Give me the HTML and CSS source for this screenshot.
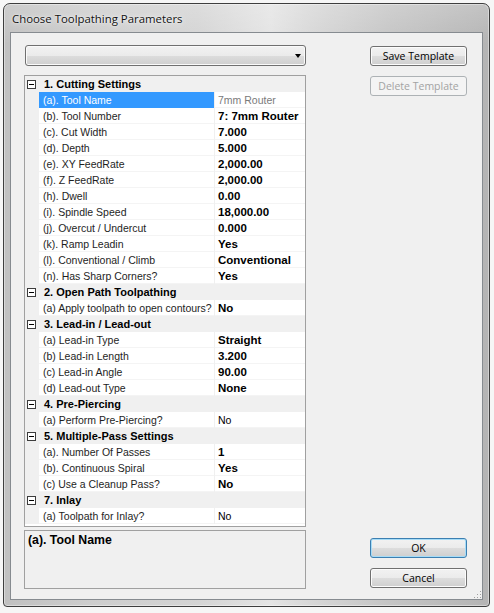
FILE: index.html
```html
<!DOCTYPE html>
<html>
<head>
<meta charset="utf-8">
<title>Choose Toolpathing Parameters</title>
<link rel="stylesheet" href="styles.css">
</head>
<body>
<div class="window">
  <div class="titlebar"><span class="title">Choose Toolpathing Parameters</span></div>
  <div class="client">
    <div class="left">
      <div class="combo"><span class="arrow"></span></div>
      <div class="grid">
        <div class="row cat"><div class="m"><span class="box"></span></div><div class="cat-label">1. Cutting Settings</div></div>
        <div class="row"><div class="m"></div><div class="label sel">(a). Tool Name</div><div class="value ro">7mm Router</div></div>
        <div class="row"><div class="m"></div><div class="label">(b). Tool Number</div><div class="value b">7: 7mm Router</div></div>
        <div class="row"><div class="m"></div><div class="label">(c). Cut Width</div><div class="value b">7.000</div></div>
        <div class="row"><div class="m"></div><div class="label">(d). Depth</div><div class="value b">5.000</div></div>
        <div class="row"><div class="m"></div><div class="label">(e). XY FeedRate</div><div class="value b">2,000.00</div></div>
        <div class="row"><div class="m"></div><div class="label">(f). Z FeedRate</div><div class="value b">2,000.00</div></div>
        <div class="row"><div class="m"></div><div class="label">(h). Dwell</div><div class="value b">0.00</div></div>
        <div class="row"><div class="m"></div><div class="label">(i). Spindle Speed</div><div class="value b">18,000.00</div></div>
        <div class="row"><div class="m"></div><div class="label">(j). Overcut / Undercut</div><div class="value b">0.000</div></div>
        <div class="row"><div class="m"></div><div class="label">(k). Ramp Leadin</div><div class="value b">Yes</div></div>
        <div class="row"><div class="m"></div><div class="label">(l). Conventional / Climb</div><div class="value b">Conventional</div></div>
        <div class="row"><div class="m"></div><div class="label">(n). Has Sharp Corners?</div><div class="value b">Yes</div></div>
        <div class="row cat"><div class="m"><span class="box"></span></div><div class="cat-label">2. Open Path Toolpathing</div></div>
        <div class="row"><div class="m"></div><div class="label">(a) Apply toolpath to open contours?</div><div class="value b">No</div></div>
        <div class="row cat"><div class="m"><span class="box"></span></div><div class="cat-label">3. Lead-in / Lead-out</div></div>
        <div class="row"><div class="m"></div><div class="label">(a) Lead-in Type</div><div class="value b">Straight</div></div>
        <div class="row"><div class="m"></div><div class="label">(b) Lead-in Length</div><div class="value b">3.200</div></div>
        <div class="row"><div class="m"></div><div class="label">(c) Lead-in Angle</div><div class="value b">90.00</div></div>
        <div class="row"><div class="m"></div><div class="label">(d) Lead-out Type</div><div class="value b">None</div></div>
        <div class="row cat"><div class="m"><span class="box"></span></div><div class="cat-label">4. Pre-Piercing</div></div>
        <div class="row"><div class="m"></div><div class="label">(a) Perform Pre-Piercing?</div><div class="value">No</div></div>
        <div class="row cat"><div class="m"><span class="box"></span></div><div class="cat-label">5. Multiple-Pass Settings</div></div>
        <div class="row"><div class="m"></div><div class="label">(a). Number Of Passes</div><div class="value b">1</div></div>
        <div class="row"><div class="m"></div><div class="label">(b). Continuous Spiral</div><div class="value b">Yes</div></div>
        <div class="row"><div class="m"></div><div class="label">(c) Use a Cleanup Pass?</div><div class="value b">No</div></div>
        <div class="row cat"><div class="m"><span class="box"></span></div><div class="cat-label">7. Inlay</div></div>
        <div class="row"><div class="m"></div><div class="label">(a) Toolpath for Inlay?</div><div class="value">No</div></div>
      </div>
      <div class="desc"><div class="desc-title">(a). Tool Name</div></div>
    </div>
    <div class="right">
      <button class="btn save">Save Template</button>
      <button class="btn disabled">Delete Template</button>
      <button class="btn default ok">OK</button>
      <button class="btn cancel">Cancel</button>
    </div>
    <div class="grip"></div>
  </div>
</div>
</body>
</html>
```

FILE: styles.css
```css
html, body {
  margin: 0;
  padding: 0;
}
body {
  background: #f6f6f6;
  width: 494px;
  height: 613px;
  overflow: hidden;
  padding: 3px 0 0 3px;
  box-sizing: border-box;
}
.window {
  width: 487px;
  height: 604px;
  box-sizing: border-box;
  border: 1px solid #3e3e3e;
  border-radius: 7px 7px 4px 4px;
  background:
    linear-gradient(to bottom, rgba(255,255,255,0.2), rgba(255,255,255,0) 40px),
    linear-gradient(to right, #c0c0c0 0%, #cdcdcd 18%, #d4d4d4 40%, #e4e4e4 55%, #d6d6d6 64%, #c4c4c4 80%, #b4b4b4 100%);
  display: flex;
  flex-direction: column;
  box-shadow: inset 0 0 0 1px rgba(255,255,255,0.4);
}
.titlebar {
  height: 28px;
  flex: none;
  display: flex;
  align-items: center;
  padding-left: 8px;
}
.title {
  font-family: "Open Sans", "Noto Sans", sans-serif;
  font-size: 11.4px;
  color: #111;
  text-shadow: 0 0 6px rgba(255,255,255,0.9), 0 0 2px rgba(255,255,255,0.9);
  margin-top: 1px;
}
.client {
  position: relative;
  flex: none;
  margin: 0 6px 6px 6px;
  height: 568px;
  box-sizing: border-box;
  border: 1px solid #868b90;
  background: #f0f0f0;
  display: flex;
  font-family: "Liberation Sans", Arial, sans-serif;
}
.left {
  margin-left: 13px;
  width: 282px;
  padding-top: 12px;
  display: flex;
  flex-direction: column;
}
.combo {
  position: relative;
  margin-left: 1px;
  width: 281px;
  height: 21px;
  box-sizing: border-box;
  border: 1px solid #707070;
  border-radius: 3px;
  background: linear-gradient(#f2f2f2 0%, #ebebeb 50%, #dddddd 50%, #cfcfcf 100%);
  box-shadow: inset 0 0 0 1px #fafafa;
}
.arrow {
  position: absolute;
  right: 4px;
  top: 8px;
  width: 0;
  height: 0;
  border-left: 3.5px solid transparent;
  border-right: 3.5px solid transparent;
  border-top: 4px solid #000;
}
.grid {
  margin-top: 9px;
  height: 452px;
  box-sizing: border-box;
  border: 1px solid #a0a0a0;
  background: #fff;
  font-size: 10.5px;
  overflow: hidden;
}
.row {
  display: flex;
  height: 16px;
  line-height: 16px;
  white-space: nowrap;
}
.m {
  width: 14px;
  flex: none;
  background: #f0f0f0;
  position: relative;
}
.cat {
  background: #f0f0f0;
}
.box {
  position: absolute;
  left: 2px;
  top: 4px;
  width: 9px;
  height: 9px;
  box-sizing: border-box;
  border: 1px solid #3c3c3c;
  background: #fff;
}
.box::after {
  content: "";
  position: absolute;
  left: 1px;
  top: 3px;
  width: 5px;
  height: 1px;
  background: #000;
}
.cat-label {
  padding-left: 5px;
  font-weight: bold;
  font-size: 11px;
  color: #000;
}
.label {
  width: 176px;
  flex: none;
  box-sizing: border-box;
  padding-left: 4px;
  border-right: 1px solid #f0f0f0;
  color: #1e1e1e;
  box-shadow: inset 0 -1px 0 #f4f4f4;
  overflow: visible;
}
.label.sel {
  background: #3399ff;
  color: #fff;
  box-shadow: none;
}
.value {
  flex: 1;
  padding-left: 3px;
  color: #000;
  font-size: 10.5px;
  box-shadow: inset 0 -1px 0 #f4f4f4;
}
.value.b {
  font-weight: bold;
  font-size: 11.5px;
}
.value.ro {
  color: #7a7a7a;
}
.desc {
  margin-top: 3px;
  height: 59px;
  box-sizing: border-box;
  border: 1px solid #a0a0a0;
  background: #f0f0f0;
  padding: 2px 0 0 3px;
}
.desc-title {
  font-weight: bold;
  font-size: 12.3px;
  color: #000;
}
.right {
  margin-left: 64px;
  width: 97px;
  padding-top: 13px;
  padding-bottom: 11px;
  display: flex;
  flex-direction: column;
}
.btn {
  display: block;
  width: 97px;
  height: 20px;
  margin: 0;
  padding: 0;
  box-sizing: border-box;
  border: 1px solid #707070;
  border-radius: 3px;
  background: linear-gradient(#f2f2f2 0%, #ebebeb 50%, #dddddd 50%, #cfcfcf 100%);
  box-shadow: inset 0 0 0 1px #fcfcfc;
  font-family: "Open Sans", "Noto Sans", sans-serif;
  font-size: 10.5px;
  line-height: 17px;
  color: #000;
  text-align: center;
}
.btn.disabled {
  margin-top: 10px;
  border-color: #adb2b5;
  background: #f4f4f4;
  box-shadow: none;
  color: #a3a3a3;
}
.btn.default {
  margin-top: auto;
  border-color: #3c7fb1;
  box-shadow: inset 0 0 0 1px #a6dcf7;
}
.btn.cancel {
  margin-top: 10px;
}
.grip {
  position: absolute;
  right: 1px;
  bottom: 1px;
  width: 8px;
  height: 8px;
  background-image: radial-gradient(circle, #a0a0a0 0.8px, transparent 1px);
  background-size: 3px 3px;
  clip-path: polygon(100% 0, 100% 100%, 0 100%);
}
```
